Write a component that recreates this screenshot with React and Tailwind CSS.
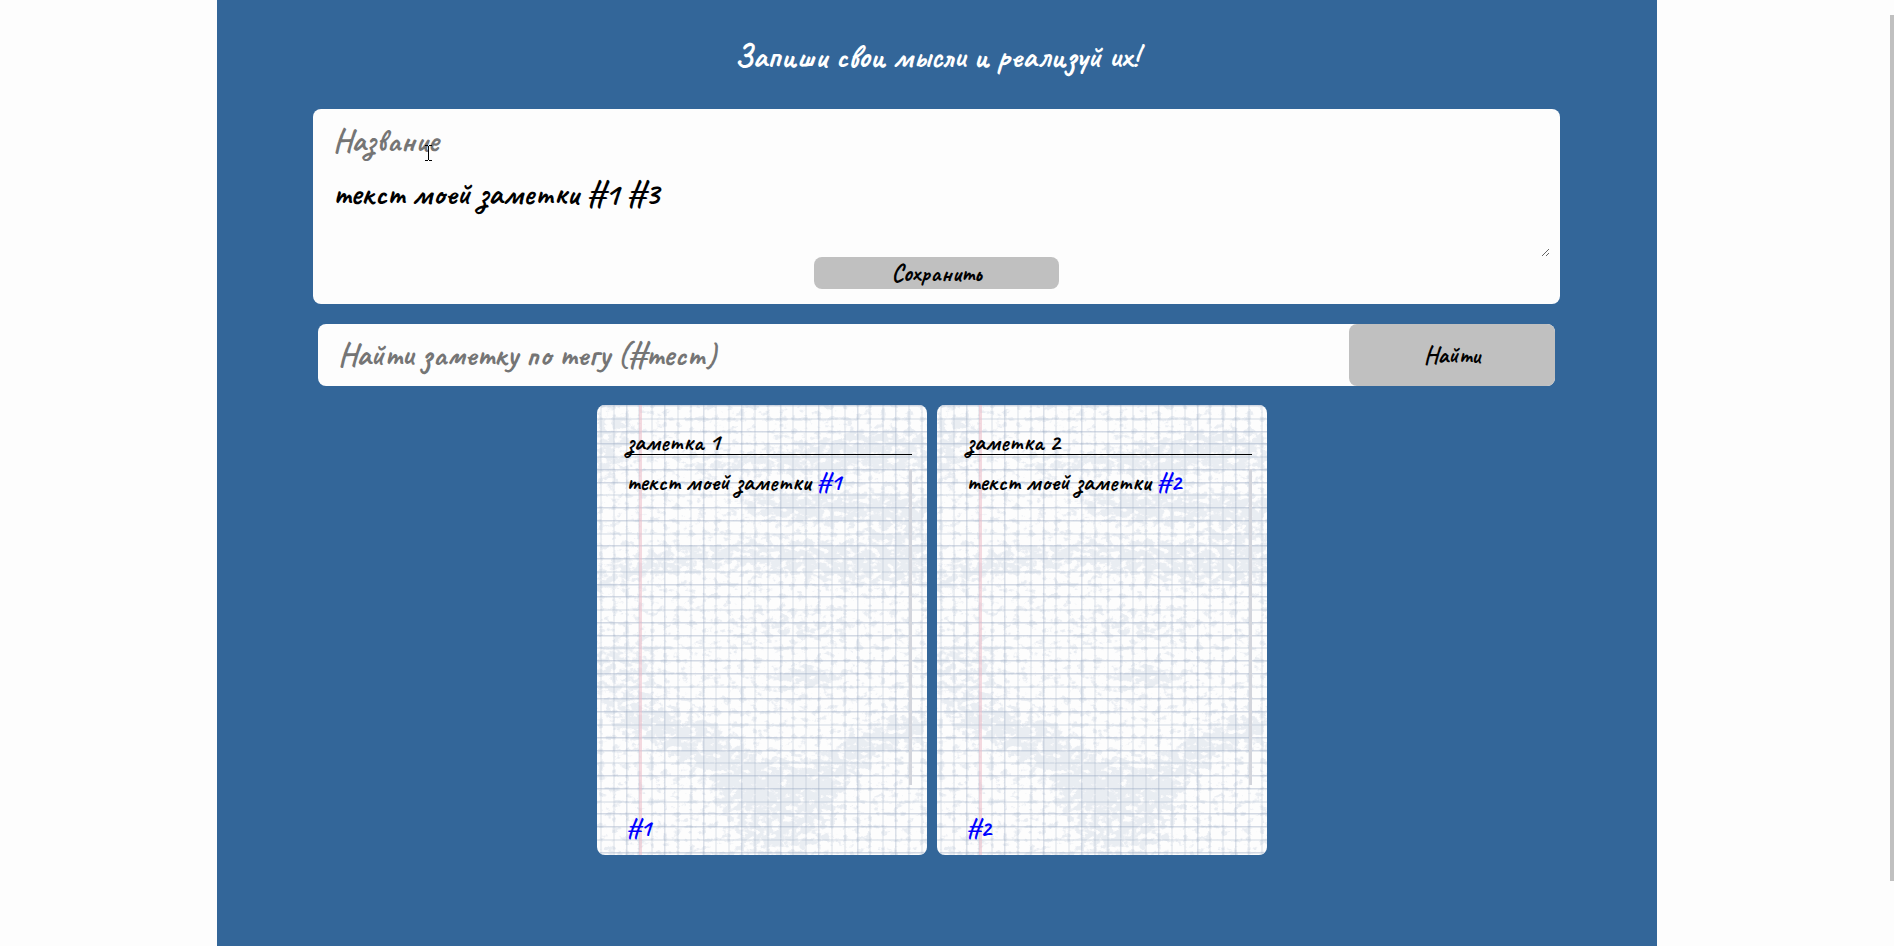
import { useId, useState } from "react";

const COLUMNS = Array.from({ length: 26 }, (_, i) => 3 + Math.round(i * 12.83));
const ROWS = Array.from({ length: 36 }, (_, i) => Math.round(i * 12.76));

const NOTES = [
  { title: "заметка 1", text: "текст моей заметки", tag: "#1" },
  { title: "заметка 2", text: "текст моей заметки", tag: "#2" },
];

function SquaredPaper() {
  const id = useId();
  const grain = `${id}-grain`;
  const soft = `${id}-soft`;
  return (
    <svg
      aria-hidden="true"
      viewBox="0 0 330 450"
      preserveAspectRatio="none"
      className="absolute inset-0 -z-10 h-full w-full"
    >
      <defs>
        <filter id={soft} x="-20%" y="-20%" width="140%" height="140%">
          <feGaussianBlur stdDeviation="6" />
        </filter>
        <filter
          id={grain}
          filterUnits="userSpaceOnUse"
          x="0"
          y="0"
          width="330"
          height="450"
          colorInterpolationFilters="sRGB"
        >
          <feTurbulence type="fractalNoise" baseFrequency="0.12 0.17" numOctaves="4" seed="7" result="noise" />
          <feComposite in="SourceGraphic" in2="noise" operator="arithmetic" k1="0" k2="0.5" k3="1" k4="0" />
          <feColorMatrix values="0 0 0 0 0.915  0 0 0 0 0.928  0 0 0 0 0.95  0 0 0 7 -4.6" />
        </filter>
      </defs>
      <rect width="330" height="450" fill="#fdfdfd" />
      <g filter={`url(#${grain})`}>
        <rect width="330" height="450" fillOpacity="0.08" />
        {COLUMNS.map((x) => (
          <rect key={x} x={x - 1} width="4" height="450" fillOpacity="0.25" />
        ))}
        {ROWS.map((y) => (
          <rect key={y} y={y - 1} width="330" height="4" fillOpacity="0.2" />
        ))}
        <g filter={`url(#${soft})`} fillOpacity="0.65">
          <path d="M0 14 L34 10 L30 60 L0 80Z" fillOpacity="0.5" />
          <path d="M90 54 Q200 50 220 34 Q270 22 330 30 V64 Q220 70 90 62Z" />
          <path d="M140 94 Q220 82 330 92 V114 Q220 122 150 110Z" />
          <path d="M270 100 H330 V150 H270Z" fillOpacity="0.4" />
          <path d="M30 156 Q90 138 200 138 T330 144 V176 Q230 182 150 160 Q70 160 0 188 V166Z" />
          <path d="M140 220 Q220 200 260 222 Q220 240 140 232Z" fillOpacity="0.35" />
          <path d="M0 236 H60 V310 H0Z" fillOpacity="0.35" />
          <path d="M180 268 Q220 262 250 274 Q200 284 180 274Z" fillOpacity="1" />
          <path d="M20 306 H80 Q110 312 150 346 Q190 366 226 354 Q270 312 330 306 V334 Q280 346 250 374 Q200 416 130 392 Q90 348 20 326Z" />
          <path d="M110 374 H250 L226 430 L200 450 H150Z" fillOpacity="0.5" />
        </g>
      </g>
      {COLUMNS.map((x) => (
        <rect key={x} x={x} width="2" height="450" fill="#a5b3ca" fillOpacity="0.2" />
      ))}
      {ROWS.map((y) => (
        <rect key={y} y={y} width="330" height="2" fill="#a5b3ca" fillOpacity="0.24" />
      ))}
      {COLUMNS.filter((_, i) => i % 3 === 2).map((x) => (
        <rect key={x} x={x} width="1" height="450" fill="#8b99bb" fillOpacity="0.16" />
      ))}
      {ROWS.filter((_, i) => i % 3 !== 1).map((y) => (
        <rect key={y} y={y} width="330" height="1" fill="#8b99bb" fillOpacity="0.22" />
      ))}
      <rect x="42" width="3" height="450" fill="#ecbcc6" fillOpacity="0.55" />
    </svg>
  );
}

function TagLink({ children }) {
  return (
    <a href={children} className="text-[#0000ff]">
      {children}
    </a>
  );
}

function Note({ title, text, tag }) {
  return (
    <article className="relative isolate mr-[10px] flex h-[450px] w-[330px] flex-col overflow-hidden rounded-lg pt-6 pr-[15px] pb-[14px] pl-[30px] text-2xl leading-[26px]">
      <SquaredPaper />
      <h2 className="-ml-0.5 h-[26px] border-b border-black pl-0.5">{title}</h2>
      <div className="mt-[14px] h-[316px] border-r-3 border-[#d3d5dc]">
        {text} <TagLink>{tag}</TagLink>
      </div>
      <div className="mt-auto">
        <TagLink>{tag}</TagLink>
      </div>
    </article>
  );
}

export default function App() {
  const [title, setTitle] = useState("");
  const [text, setText] = useState("текст моей заметки #1 #3");
  const [query, setQuery] = useState("");

  return (
    <div className="min-h-screen bg-[#fdfdfd] pr-5 font-[Caveat,cursive] font-bold text-black">
      <main className="mx-auto min-h-screen max-w-[1440px] bg-[#336699] pr-[97px] pl-24">
        <h1 className="pt-[37px] text-center text-[32px] leading-[40px] text-white">
          Запиши свои мысли и реализуй их!
        </h1>

        <form
          onSubmit={(e) => e.preventDefault()}
          className="relative mt-8 flex flex-col items-center rounded-lg bg-[#fdfdfd] px-[10px] pt-2 pb-[15px]"
        >
          <input
            aria-label="Название"
            placeholder="Название"
            value={title}
            onChange={(e) => setTitle(e.target.value)}
            className="h-12 w-full px-[10px] text-[32px] outline-none placeholder:text-[#757575]"
          />
          <textarea
            aria-label="Текст заметки"
            value={text}
            onChange={(e) => setText(e.target.value)}
            className="mt-1 block h-[88px] w-full resize px-[10px] py-[5px] text-[32px] leading-[40px] outline-none"
          />
          <button type="submit" className="h-8 w-[245px] rounded-lg bg-[#c0c0c0] text-2xl">
            Сохранить
          </button>
          <svg
            aria-hidden="true"
            viewBox="0 0 7 16"
            className="pointer-events-none absolute top-9 left-[112px] h-4 w-[7px]"
            fill="none"
            stroke="#000"
            shapeRendering="crispEdges"
          >
            <path d="M0 .5h3M4 .5h3M3.5 1v14M0 15.5h3M4 15.5h3" />
          </svg>
        </form>

        <form onSubmit={(e) => e.preventDefault()} className="mx-[5px] mt-5 flex rounded-lg bg-[#fdfdfd]">
          <input
            aria-label="Найти заметку по тегу"
            placeholder="Найти заметку по тегу (#тест)"
            value={query}
            onChange={(e) => setQuery(e.target.value)}
            className="h-[62px] min-w-0 flex-1 px-5 pb-[2px] text-[32px] outline-none placeholder:text-[#757575]"
          />
          <button type="submit" className="w-[206px] rounded-lg bg-[#c0c0c0] text-2xl">
            Найти
          </button>
        </form>

        <section aria-label="Заметки" className="mt-[19px] flex flex-wrap justify-center gap-y-[10px]">
          {NOTES.map((note) => (
            <Note key={note.tag} {...note} />
          ))}
        </section>
      </main>
      <div aria-hidden="true" className="fixed top-[15px] right-0 bottom-[65px] w-1 bg-[#c0c0c0]" />
    </div>
  );
}
